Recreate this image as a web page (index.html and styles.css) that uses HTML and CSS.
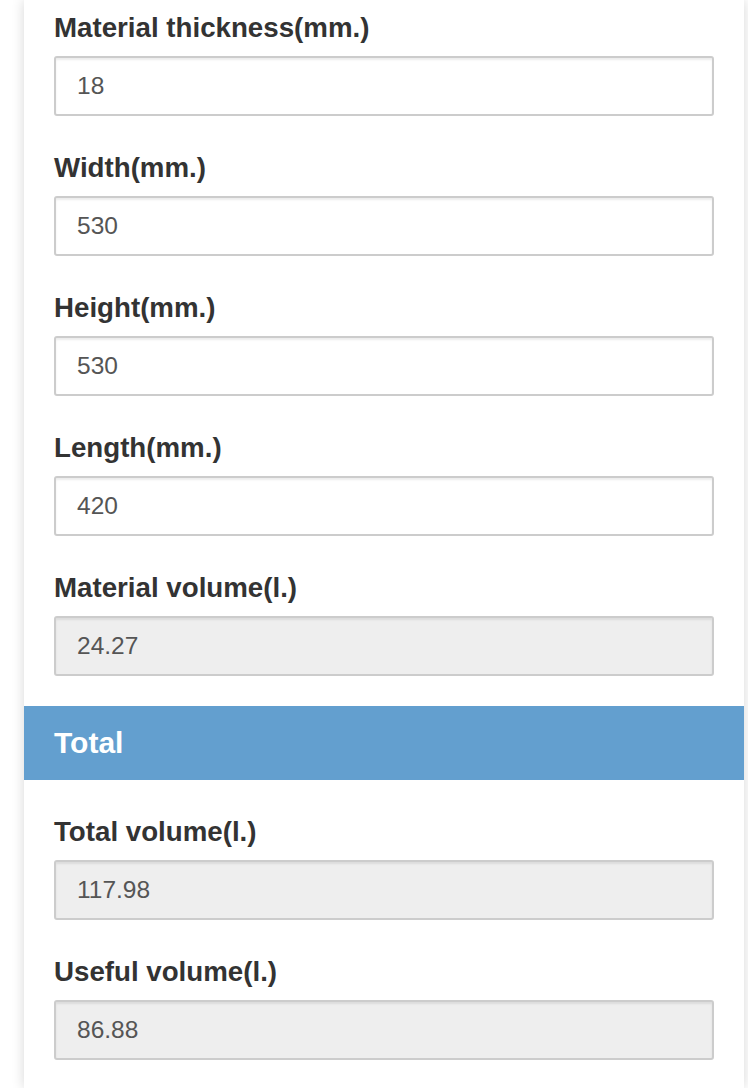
FILE: index.html
```html
<!DOCTYPE html>
<html>
<head>
<meta charset="utf-8">
<link rel="stylesheet" href="styles.css">
</head>
<body>
<div class="panel">
  <div class="section">
    <div class="group">
      <label class="label">Material thickness(mm.)</label>
      <div class="input">18</div>
    </div>
    <div class="group">
      <label class="label">Width(mm.)</label>
      <div class="input">530</div>
    </div>
    <div class="group">
      <label class="label">Height(mm.)</label>
      <div class="input">530</div>
    </div>
    <div class="group">
      <label class="label">Length(mm.)</label>
      <div class="input">420</div>
    </div>
    <div class="group">
      <label class="label">Material volume(l.)</label>
      <div class="input readonly">24.27</div>
    </div>
  </div>
  <div class="heading">Total</div>
  <div class="section section-total">
    <div class="group">
      <label class="label">Total volume(l.)</label>
      <div class="input readonly">117.98</div>
    </div>
    <div class="group">
      <label class="label">Useful volume(l.)</label>
      <div class="input readonly">86.88</div>
    </div>
  </div>
</div>
</body>
</html>
```

FILE: styles.css
```css
html, body {
  margin: 0;
  padding: 0;
  background: #fff;
  font-family: "Liberation Sans", Arial, Helvetica, sans-serif;
  overflow: hidden;
}

.panel {
  margin-left: 24px;
  width: 720px;
  min-height: 1088px;
  background: #fff;
  box-shadow: 0 0 12px rgba(0, 0, 0, 0.16);
}

.section {
  padding: 10px 30px 0 30px;
}

.section-total {
  padding-top: 34px;
}

.group {
  margin-bottom: 34px;
}

.section .group:last-child {
  margin-bottom: 30px;
}

.label {
  display: block;
  font-size: 27.7px;
  line-height: 36px;
  font-weight: bold;
  color: #333;
  margin-bottom: 10px;
}

.input {
  box-sizing: border-box;
  height: 60px;
  border: 2px solid #ccc;
  border-radius: 3px;
  box-shadow: inset 0 2px 2px rgba(0, 0, 0, 0.075);
  padding: 0 21px;
  display: flex;
  align-items: center;
  font-size: 24.5px;
  color: #555;
  background: #fff;
}

.input.readonly {
  background: #eee;
}

.heading {
  height: 74px;
  background: #639fcf;
  color: #fff;
  font-size: 30px;
  font-weight: bold;
  padding: 0 30px;
  display: flex;
  align-items: center;
}
```
